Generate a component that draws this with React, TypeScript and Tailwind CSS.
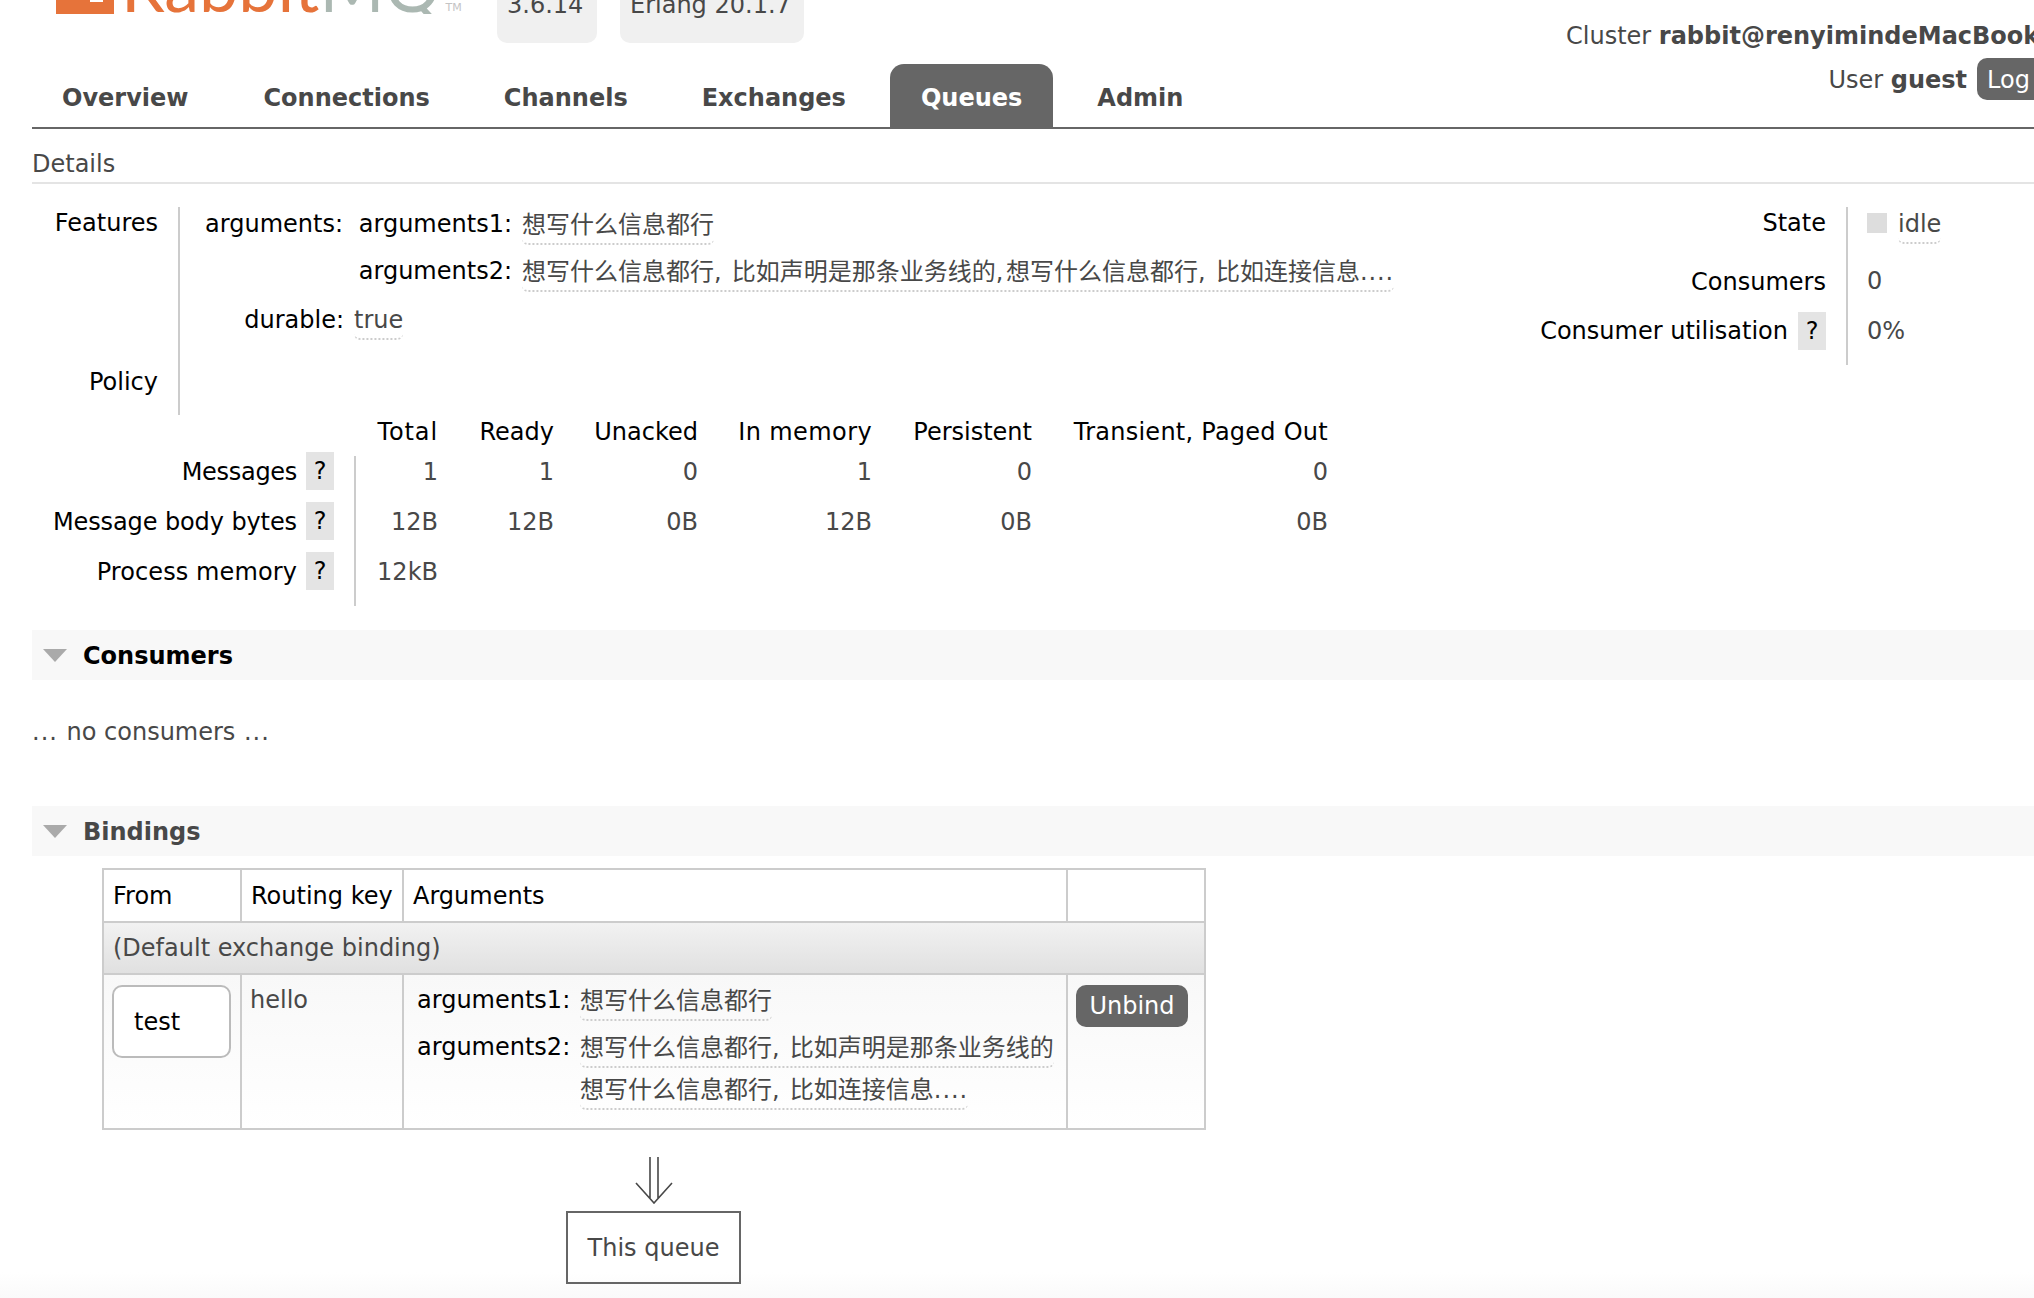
import React from "react";

const cjk1 = "想写什么信息都行";
function Dotted({ children, className = "" }: { children: React.ReactNode; className?: string }) {
  return (
    <span className={`inline-block h-[36px] leading-[32px] text-[#484848] border-b-2 border-dotted border-[#ccc] rounded-b-[6px] whitespace-nowrap ${className}`}>
      {children}
    </span>
  );
}
function Q() {
  return <span className="inline-block w-[28px] h-[38px] leading-[38px] bg-[#e4e4e4] text-center text-black">?</span>;
}
function Tri() {
  return (
    <svg width="24" height="13" viewBox="0 0 24 13" className="shrink-0">
      <polygon points="0,0 24,0 12,13" fill="#aaaaaa" />
    </svg>
  );
}
function C() {
  return <span className="tracking-[1.3px]">, </span>;
}
function Dots() {
  return <span className="tracking-[0.9px]">....</span>;
}
const tabs = ["Overview", "Connections", "Channels", "Exchanges", "Queues", "Admin"];
const cols = "grid grid-cols-[83px_116px_144px_174px_160px_296px]";
const labels = [
  { l: "Messages", t: "tracking-[-0.3px]" },
  { l: "Message body bytes", t: "tracking-[-0.1px]" },
  { l: "Process memory", t: "tracking-[0.1px]" },
];

export default function App() {
  return (
    <div className="relative w-[2034px] h-[1298px] overflow-hidden bg-[linear-gradient(to_bottom,#ffffff_98%,#fafafa_100%)] text-[24px] leading-[30px] text-[#484848] font-['DejaVu_Sans','Noto_Sans_CJK_SC',sans-serif]">
      <div className="absolute top-[-28px] left-[1905px] flex items-start gap-[12px] whitespace-nowrap">
        <span className="text-[#777]">Virtual host</span>
        <span className="w-[60px] h-[39px] bg-white border-2 border-[#bbb] rounded-[8px]" />
      </div>
      <header className="pl-[32px]">
        <div className="flex items-start h-[64px] whitespace-nowrap">
          <div className="flex items-end h-[14px] ml-[24px] w-[441px] shrink-0 overflow-hidden">
            <svg width="58" height="14" viewBox="0 0 58 14" className="shrink-0">
              <path d="M0 0H34V2H47V0H58V14H0Z" fill="#e6733a" />
            </svg>
            <div className="ml-[7px] h-[14px] flex items-end">
              <span className="text-[70px] leading-[14px] font-normal font-['Lato',sans-serif] -translate-y-[22px] text-[#e6733a]">
                Rabbit<span className="text-[#abb8b2]">MQ</span>
              </span>
              <span className="ml-[5px] mb-[1px] text-[11px] leading-[11px] text-[#c4c4c4]">TM</span>
            </div>
          </div>
          <span className="flex items-end shrink-0 w-[100px] h-[43px] px-[10px] pb-[23px] bg-[#f0f0f0] rounded-b-[10px]">3.6.14</span>
          <span className="flex items-end shrink-0 w-[184px] h-[43px] ml-[23px] px-[10px] pb-[23px] bg-[#f0f0f0] rounded-b-[10px]">Erlang 20.1.7</span>
          <span className="ml-[762px] mt-[21px]">
            Cluster <b>rabbit@renyimindeMacBook-Pro</b>
          </span>
        </div>
        <nav className="flex items-start h-[65px] border-b-2 border-[#666] whitespace-nowrap">
          {tabs.map((t) => (
            <a
              key={t}
              className={`h-[63px] pt-[19px] font-bold rounded-t-[14px] ${
                t === "Queues" ? "px-[31px] mr-[14px] bg-[#666] text-white" : t === "Overview" ? "px-[30px] mr-[15px] text-[#484848]" : "px-[30px] mr-[14px] text-[#484848]"
              }`}
            >
              {t}
            </a>
          ))}
          <div className="flex items-center ml-[601px] -mt-[6px]">
            <span className="pt-[2px]">
              User <b>guest</b>
            </span>
            <span className="ml-[10px] h-[42px] leading-[44px] px-[10px] bg-[#666] text-white rounded-[10px]">Log out</span>
          </div>
        </nav>
      </header>

      <main className="pl-[32px]">
        <h2 className="h-[55px] pt-[20px] border-b-2 border-[#e4e4e4] leading-[30px] font-normal">Details</h2>

        <section className="flex justify-between mt-[23px] pr-[20px] h-[208px]">
          <div className="flex">
            <div className="w-[148px] pt-[1px] pr-[20px] border-r-2 border-[#ccc] text-right text-black">
              <div className="h-[30px]">Features</div>
              <div className="h-[30px] mt-[129px]">Policy</div>
            </div>
            <div className="pl-[25px] text-black">
              <div className="grid grid-cols-[138px_1fr] gap-x-[14px] h-[30px] pt-[2px]">
                <span className="text-right">arguments:</span>
                <div className="flex flex-col gap-[17px]">
                  <div className="flex h-[30px] items-start">
                    <span className="w-[155px] text-right">arguments1:</span>
                    <Dotted className="ml-[10px]">{cjk1}</Dotted>
                  </div>
                  <div className="flex h-[30px] items-start">
                    <span className="w-[155px] text-right">arguments2:</span>
                    <Dotted className="ml-[10px]">
                      想写什么信息都行<C />比如声明是那条业务线的<span className="tracking-[2.6px]">,</span>想写什么信息都行<C />比如连接信息<Dots />
                    </Dotted>
                  </div>
                </div>
              </div>
              <div className="grid grid-cols-[139px_1fr] gap-x-[10px] h-[30px] mt-[67px]">
                <span className="text-right pt-[1px]">durable:</span>
                <Dotted className="justify-self-start leading-[30px] h-[32px]">true</Dotted>
              </div>
            </div>
          </div>
          <div className="flex h-[158px] whitespace-nowrap">
            <div className="pt-[1px] pr-[20px] border-r-2 border-[#ccc] text-right text-black">
              <div className="h-[30px]">State</div>
              <div className="h-[30px] mt-[29px]">Consumers</div>
              <div className="flex items-center justify-end h-[38px] mt-[15px] gap-[10px]">
                Consumer utilisation <Q />
              </div>
            </div>
            <div className="w-[166px] pl-[19px]">
              <div className="flex items-start h-[30px] pt-[1px]">
                <span className="w-[20px] h-[20px] mt-[5px] bg-[#ddd]" />
                <Dotted className="ml-[11px] leading-[30px] h-[32px] border-[#666]">idle</Dotted>
              </div>
              <div className="h-[30px] mt-[29px]">0</div>
              <div className="h-[30px] mt-[20px]">0%</div>
            </div>
          </div>
        </section>

        <section className="mt-[1px] w-[1296px]">
          <div className={`${cols} ml-[323px] h-[30px] leading-[32px] text-right text-black whitespace-nowrap`}>
            <span className="tracking-[0.9px]">Total</span>
            <span>Ready</span>
            <span>Unacked</span>
            <span className="tracking-[0.4px]">In memory</span>
            <span>Persistent</span>
            <span className="tracking-[0.25px]">Transient, Paged Out</span>
          </div>
          <div className="flex">
            <div className="w-[302px] mr-[21px] text-black">
              {labels.map(({ l, t }) => (
                <div key={l} className="flex items-center justify-end gap-[9px] h-[50px]">
                  <span className={`pt-[2px] ${t}`}>{l}</span> <Q />
                </div>
              ))}
            </div>
            <div className="h-[150px] mt-[10px] border-l-2 border-[#ccc] -ml-[1px]">
              <div className="-mt-[10px] -ml-[1px] text-right leading-[52px]">
                <div className={`${cols} h-[50px]`}>
                  <span>1</span><span>1</span><span>0</span><span>1</span><span>0</span><span>0</span>
                </div>
                <div className={`${cols} h-[50px]`}>
                  <span>12B</span><span>12B</span><span>0B</span><span>12B</span><span>0B</span><span>0B</span>
                </div>
                <div className={`${cols} h-[50px]`}>
                  <span>12kB</span>
                </div>
              </div>
            </div>
          </div>
        </section>

        <h2 className="flex items-center h-[50px] mt-[24px] pl-[11px] gap-[16px] bg-[#f8f8f8] font-bold text-black">
          <Tri /> <span className="pt-[2px]">Consumers</span>
        </h2>
        <p className="h-[30px] mt-[37px] whitespace-nowrap">
          <span className="tracking-[1px]">... </span>no consumers<span className="tracking-[1px]"> ...</span>
        </p>
        <h2 className="flex items-center h-[50px] mt-[59px] pl-[11px] gap-[16px] bg-[#f8f8f8] font-bold text-[#484848]">
          <Tri /> <span className="pt-[2px]">Bindings</span>
        </h2>

        <table className="table-fixed w-[1102px] ml-[70px] mt-[12px] border-collapse border-2 border-[#ccc]">
          <colgroup>
            <col className="w-[138px]" />
            <col className="w-[162px]" />
            <col className="w-[664px]" />
            <col className="w-[138px]" />
          </colgroup>
          <thead>
            <tr className="h-[53px] text-black font-normal">
              <th className="border-2 border-[#ccc] px-[9px] text-left font-normal">From</th>
              <th className="border-2 border-[#ccc] px-[9px] text-left font-normal whitespace-nowrap">Routing key</th>
              <th className="border-2 border-[#ccc] px-[9px] text-left font-normal">Arguments</th>
              <th className="border-2 border-[#ccc]" />
            </tr>
          </thead>
          <tbody>
            <tr className="h-[52px] bg-[linear-gradient(to_bottom,#f2f2f2,#e0e0e0)]">
              <td colSpan={4} className="border-2 border-[#ccc] px-[9px]">(Default exchange binding)</td>
            </tr>
            <tr className="h-[155px] align-top bg-[linear-gradient(to_bottom,#f8f8f8,#ffffff)]">
              <td className="border-2 border-[#ccc] pl-[8px] pt-[10px]">
                <div className="flex items-center w-[119px] h-[73px] pl-[20px] bg-white border-2 border-[#bbb] rounded-[10px] text-black">test</div>
              </td>
              <td className="border-2 border-[#ccc] px-[8px] pt-[10px]">hello</td>
              <td className="border-2 border-[#ccc] pl-[13px] pt-[10px]">
                <div className="flex items-start h-[30px] text-black">
                  <span className="w-[153px]">arguments1:</span>
                  <Dotted className="ml-[10px]">{cjk1}</Dotted>
                </div>
                <div className="flex items-start mt-[17px] text-black">
                  <span className="w-[153px]">arguments2:</span>
                  <div className="ml-[10px] flex flex-col items-start gap-[6px]">
                    <Dotted>想写什么信息都行<C />比如声明是那条业务线的</Dotted>
                    <Dotted>想写什么信息都行<C />比如连接信息<Dots /></Dotted>
                  </div>
                </div>
              </td>
              <td className="border-2 border-[#ccc] pl-[8px] pt-[10px]">
                <span className="block w-[112px] h-[42px] leading-[42px] bg-[#666] text-white text-center rounded-[10px]">Unbind</span>
              </td>
            </tr>
          </tbody>
        </table>

        <div className="flex flex-col items-center w-[175px] ml-[534px] mt-[27px]">
          <svg width="40" height="47" viewBox="0 0 40 47" fill="none" stroke="#484848" strokeWidth="1.6">
            <path d="M16 0V42M24 0V42M2 26L20 46L38 26" />
          </svg>
          <div className="flex items-center justify-center w-[175px] h-[73px] mt-[7px] border-2 border-[#666]">This queue</div>
        </div>
      </main>
    </div>
  );
}
